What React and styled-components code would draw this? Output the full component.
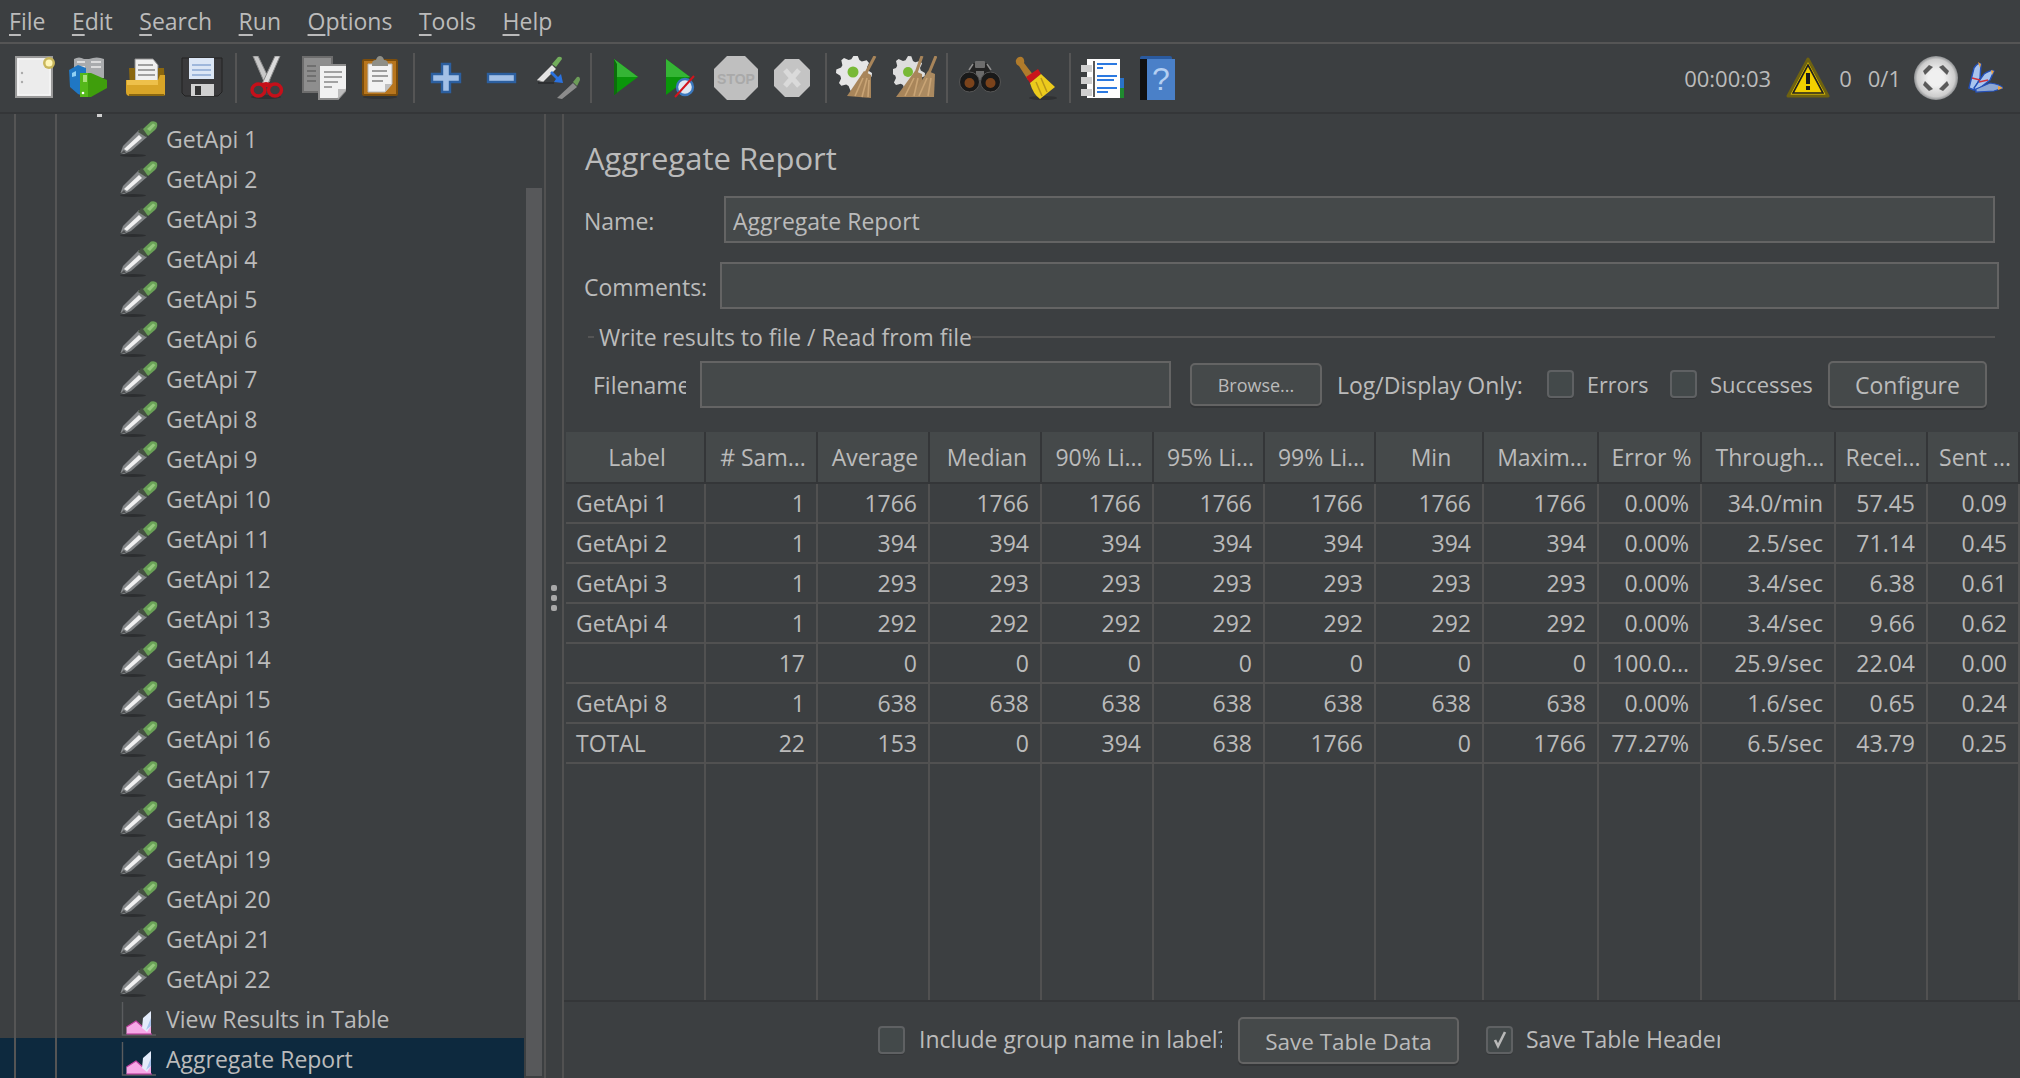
import React from 'react'
import styled, { createGlobalStyle } from 'styled-components'

const GlobalStyle = createGlobalStyle`
  html, body {
    margin: 0;
    padding: 0;
    background: #3c3f41;
    overflow: hidden;
  }
  * {
    box-sizing: border-box;
  }
`

const Window = styled.div`
  width: 2020px;
  height: 1078px;
  display: flex;
  flex-direction: column;
  overflow: hidden;
  background: #3c3f41;
  color: #bbbbbb;
  font-family: 'Open Sans', 'Noto Sans', sans-serif;
  font-size: 23px;
`

const MenuBar = styled.div`
  height: 44px;
  flex: none;
  display: flex;
  align-items: center;
  padding: 0 0 1px 9px;
  border-bottom: 2px solid #555555;
`

const MenuItem = styled.span`
  margin-right: 26.5px;
  u {
    text-decoration: underline;
    text-underline-offset: 4px;
    text-decoration-thickness: 2px;
  }
`

const Toolbar = styled.div`
  height: 70px;
  flex: none;
  display: flex;
  align-items: center;
  padding-left: 13px;
  border-bottom: 2px solid #343638;
`

const ToolIcon = styled.svg`
  flex: none;
  width: 44px;
  height: 44px;
  margin-left: ${(p) => p.$gap || 0}px;
`

const ToolSep = styled.div`
  flex: none;
  width: 2px;
  height: 50px;
  background: #555555;
  margin-left: ${(p) => p.$gap}px;
`

const Status = styled.div`
  margin-left: auto;
  display: flex;
  align-items: center;
  padding-right: 17px;
`

const StatusText = styled.span`
  margin-left: ${(p) => p.$gap || 0}px;
  font-size: 22px;
`

const Main = styled.div`
  flex: 1;
  min-height: 0;
  display: flex;
`

const TreePane = styled.div`
  width: 544px;
  flex: none;
  display: flex;
`

const Tree = styled.div`
  width: 524px;
  flex: none;
`

const TreeStub = styled.div`
  height: 4px;
  padding-left: 97px;
  background-image: linear-gradient(#555555, #555555), linear-gradient(#555555, #555555);
  background-size: 2px 100%, 2px 100%;
  background-position: 14px 0, 55px 0;
  background-repeat: no-repeat;
  i {
    display: block;
    width: 5px;
    height: 3px;
    background: #d0d0d0;
  }
`

const TreeRow = styled.div`
  height: 40px;
  display: flex;
  align-items: center;
  padding: 2px 0 0 120px;
  gap: 8px;
  background-color: ${(p) => (p.$selected ? '#0d293e' : 'transparent')};
  background-image: linear-gradient(#555555, #555555), linear-gradient(#555555, #555555);
  background-size: 2px 100%, 2px 100%;
  background-position: 14px 0, 55px 0;
  background-repeat: no-repeat;
  svg {
    flex: none;
    width: 38px;
    height: 38px;
  }
`

const ScrollTrack = styled.div`
  width: 20px;
  flex: none;
  padding: 74px 2px 2px 2px;
`

const ScrollThumb = styled.div`
  height: 100%;
  background: #57585a;
`

const Splitter = styled.div`
  width: 20px;
  flex: none;
  border-left: 2px solid #515151;
  border-right: 2px solid #515151;
  display: flex;
  flex-direction: column;
  align-items: center;
  justify-content: center;
  gap: 4px;
  padding-top: 3px;
  i {
    width: 6px;
    height: 6px;
    border-radius: 2px;
    background: #a8a8a8;
  }
`

const Panel = styled.div`
  flex: 1;
  min-width: 0;
  display: flex;
  flex-direction: column;
`

const Title = styled.div`
  font-size: 31px;
  line-height: 38px;
  padding: 25px 0 19px 21px;
`

const FormRow = styled.div`
  display: flex;
  align-items: center;
  height: 47px;
  padding-left: 20px;
  padding-right: ${(p) => p.$right}px;
  margin-bottom: 19px;
`

const FormLabel = styled.label`
  flex: none;
  width: ${(p) => p.$width}px;
  padding-top: 2px;
`

const Field = styled.input`
  flex: ${(p) => (p.$width ? 'none' : 1)};
  width: ${(p) => (p.$width ? `${p.$width}px` : 'auto')};
  height: 47px;
  min-width: 0;
  margin-left: ${(p) => p.$gap || 0}px;
  padding: 2px 7px 0;
  background: #45494a;
  border: 2px solid #646464;
  color: #bbbbbb;
  font: inherit;
  outline: none;
`

const GroupTitle = styled.div`
  display: flex;
  align-items: center;
  height: 24px;
  margin: -3px 25px 0 24px;
  &::before {
    content: '';
    width: 6px;
    height: 2px;
    margin-right: 5px;
    background: #555555;
  }
  &::after {
    content: '';
    flex: 1;
    height: 2px;
    background: #555555;
  }
`

const FileRow = styled.div`
  display: flex;
  align-items: center;
  height: 48px;
  margin-top: 11px;
  padding-left: 29px;
`

const Clipped = styled.span`
  flex: none;
  display: block;
  width: ${(p) => p.$width}px;
  margin-left: ${(p) => p.$gap || 0}px;
  padding: ${(p) => (p.$shift > 0 ? p.$shift : 0)}px 0 ${(p) => (p.$shift < 0 ? -p.$shift : 0)}px;
  font-size: ${(p) => p.$size || 23}px;
  overflow: hidden;
  white-space: nowrap;
`

const Button = styled.div`
  flex: none;
  display: flex;
  align-items: center;
  justify-content: center;
  width: ${(p) => p.$width}px;
  height: ${(p) => p.$height || 47}px;
  margin-left: ${(p) => p.$gap || 0}px;
  padding-top: 2px;
  font-size: ${(p) => p.$size || 23}px;
  background: #45494a;
  border: 2px solid #646464;
  border-radius: 5px;
  box-shadow: 0 2px 0 #343638;
`

const Checkbox = styled.span`
  flex: none;
  display: flex;
  align-items: center;
  justify-content: center;
  width: 27px;
  height: 28px;
  margin-left: ${(p) => p.$gap || 0}px;
  background: #43494a;
  border: 2px solid #5f6163;
  border-radius: 4px;
  box-shadow: 0 1px 0 #343638;
`

const ReportTable = styled.table`
  width: 1454px;
  height: 568px;
  margin: 24px 0 0 2px;
  border-collapse: separate;
  border-spacing: 0;
  table-layout: fixed;
`

const HeadCell = styled.th`
  height: 52px;
  padding: 0 0 0 4px;
  font-weight: 400;
  text-align: center;
  white-space: nowrap;
  overflow: hidden;
  background: #45494a;
  border-right: 2px solid #343638;
  border-bottom: 2px solid #343638;
`

const Cell = styled.td`
  height: 40px;
  padding: 0 ${(p) => (p.$left ? 0 : 11)}px 0 ${(p) => (p.$left ? 10 : 0)}px;
  text-align: ${(p) => (p.$left ? 'left' : 'right')};
  white-space: nowrap;
  overflow: hidden;
  border-right: 2px solid #515151;
  border-bottom: 2px solid #515151;
`

const FillCell = styled.td`
  border-right: 2px solid #515151;
  padding: 0;
`

const BottomBar = styled.div`
  flex: 1;
  display: flex;
  align-items: center;
  padding: 0 0 0 314px;
  border-top: 2px solid #343638;
`

const Pipette = () => (
  <svg viewBox="0 0 38 38">
    <ellipse cx="13" cy="35.5" rx="13" ry="1.5" fill="#2c2e30" />
    <path d="M0.5 33 L3 26 L19 10 L27 17 L11 31 L4 34 Z" fill="#85888a" />
    <path d="M4 29 L19 15 L22 18 L7 31 Z" fill="#f0f0f0" />
    <path d="M1 33 L4 30 L6 33 Z" fill="#505254" />
    <path d="M21 8 L25 9 L28 14 L26 17 L18 12 Z" fill="#465243" />
    <path d="M23 9 L31 1.5 Q35 0.5 37 3 Q38 7 35 10 L28 16 Z" fill="#6aa257" />
    <path d="M27 9 L33 3.5 L35.5 5 L30 11 Z" fill="#93c67c" />
  </svg>
)

const ReportIcon = () => (
  <svg viewBox="0 0 38 38">
    <path d="M2.5 2 V35 H36" fill="none" stroke="#5a5c5e" strokeWidth="1.4" />
    <path d="M6.5 34 V27 L16 21 L24 28 L31 25 V34 Z" fill="#f6a8e6" />
    <path d="M6.5 27 L16 21 L24 28 L31 25" fill="none" stroke="#c040a0" strokeWidth="1.2" />
    <path d="M6.5 34 H32" stroke="#c040a0" strokeWidth="1.2" />
    <path d="M22 28 L23 18 L31 11 V26 L27 32 Z" fill="#e4ecfb" />
    <path d="M26 30 L31 18 V26 Z" fill="#a9c4ee" />
  </svg>
)

// spiky outline for the gear part of the two "clear" icons
const gearPath = (cx, cy, outer, inner, teeth) => {
  const pts = []
  for (let i = 0; i < teeth * 4; i++) {
    const r = i % 4 < 2 ? outer : inner
    const a = (i / (teeth * 4)) * Math.PI * 2
    pts.push(`${(cx + r * Math.cos(a)).toFixed(1)} ${(cy + r * Math.sin(a)).toFixed(1)}`)
  }
  return `M${pts.join(' L')} Z`
}

const toolIcons = {
  newPlan: (
    <>
      <rect x="3" y="1" width="36" height="40" fill="#e6e6e6" stroke="#9a9a9a" strokeWidth="2" />
      <rect x="5" y="3" width="32" height="36" fill="#ececec" stroke="#fafafa" />
      <circle cx="9" cy="17" r="1.2" fill="#aaaaaa" />
      <circle cx="9" cy="26" r="1.2" fill="#aaaaaa" />
      <circle cx="36" cy="7" r="6" fill="#c9b75c" />
      <circle cx="36" cy="7" r="3.5" fill="#fff6b8" />
    </>
  ),
  templates: (
    <>
      <path d="M7 3 Q12 0 17 3 L22 3 Q30 0 37 3 V22 H7 Z" fill="#a9abad" />
      <path d="M10 6 H18 M24 6 H34 M10 11 H18 M24 11 H34" stroke="#dcdcdc" strokeWidth="2" />
      <path d="M2 14 L11 9 L19 12 V41 L11 38 L3 31 Z" fill="#1f77c4" />
      <path d="M5 17 L9 15 V20 L5 21 Z" fill="#8fd0f4" />
      <path d="M13 17 H24 L40 24 V32 L24 41 H13 Z" fill="#3f9e0c" />
      <path d="M13 17 H21 V41 H13 Z" fill="#55b81a" />
      <path d="M16 19 H20 V26 H16 Z" fill="#a9e07a" />
      <circle cx="16" cy="37" r="1.3" fill="#ffffff" />
    </>
  ),
  open: (
    <>
      <path d="M11 3 H29 L34 9 V26 H11 Z" fill="#f0f0f0" stroke="#8d8d8d" />
      <path d="M14 9 H29 M14 14 H31 M14 19 H31" stroke="#a0a0a0" strokeWidth="2" />
      <path d="M5 12 H11 V24 H34 V12 H40 L41 34 H6 Z" fill="#8a6710" />
      <path d="M2 24 H34 L36 19 L41 19 V38 Q41 40 38 40 H6 Q2 40 2 36 Z" fill="#d9a527" />
      <path d="M3 24 H34 V29 H3 Z" fill="#eec04a" />
      <path d="M5 38 H40 V40 H5 Z" fill="#8a6710" />
    </>
  ),
  save: (
    <>
      <path d="M2 2 H42 V36 L38 40 H5 L2 37 Z" fill="#3a3a3c" stroke="#222222" />
      <rect x="9" y="2" width="25" height="21" fill="#dbe6f5" />
      <path d="M12 9 H31 M12 14 H31 M12 19 H31" stroke="#8aa8d2" strokeWidth="1.6" />
      <rect x="11" y="28" width="23" height="12" fill="#d0d0d0" />
      <rect x="15" y="30" width="6" height="9" fill="#333333" />
    </>
  ),
  cut: (
    <>
      <ellipse cx="22" cy="41" rx="15" ry="2" fill="#2f3133" />
      <path d="M9 0 L14 0 L26 25 L21 28 Z" fill="#c8c8c8" stroke="#8c8c8c" />
      <path d="M36 0 L31 0 L18 28 L23 30 Z" fill="#dcdcdc" stroke="#8c8c8c" />
      <ellipse cx="14.5" cy="34" rx="6.5" ry="6" fill="none" stroke="#c5101a" strokeWidth="3.4" />
      <ellipse cx="31" cy="34" rx="6.5" ry="6" fill="none" stroke="#c5101a" strokeWidth="3.4" />
      <path d="M17 27 L22 26 L27 27 L24 31 H20 Z" fill="#c5101a" />
    </>
  ),
  copy: (
    <>
      <rect x="1" y="1" width="29" height="35" fill="#8e8e8e" stroke="#6d6d6d" strokeWidth="2" />
      <path d="M5 10 H14 M5 15 H14 M5 20 H14 M5 25 H14" stroke="#6f6f6f" strokeWidth="2" />
      <path d="M17 9 H45 V33 L36 43 H17 Z" fill="#f1f1f1" stroke="#8d8d8d" strokeWidth="2" />
      <path d="M22 16 H40 M22 21 H40 M22 26 H36 M22 31 H30" stroke="#a2a2a2" strokeWidth="2" />
      <path d="M36 43 V33 H45 Z" fill="#bdbdbd" />
    </>
  ),
  paste: (
    <>
      <ellipse cx="22" cy="41" rx="17" ry="2" fill="#313335" />
      <rect x="5" y="4" width="34" height="35" rx="1" fill="#b8761e" stroke="#7d4e0c" strokeWidth="2" />
      <path d="M10 8 H34 V28 L27 36 H10 Z" fill="#f2f2f2" stroke="#b9b9b9" />
      <path d="M27 36 V28 H34 Z" fill="#bfbfbf" />
      <path d="M14 15 H29 M14 20 H30 M14 25 H25" stroke="#9e9e9e" strokeWidth="2" />
      <path d="M14 8 Q14 4 18 4 Q19 0 22 0 Q25 0 26 4 Q30 4 30 8 V10 H14 Z" fill="#8f8f87" />
    </>
  ),
  plus: (
    <path
      d="M18 8 H26 V18 H36 V26 H26 V36 H18 V26 H8 V18 H18 Z"
      fill="#a3c0e6"
      stroke="#2c5f9f"
      strokeWidth="2.4"
    />
  ),
  minus: <rect x="9" y="18" width="27" height="8" fill="#a3c0e6" stroke="#2c5f9f" strokeWidth="2.4" />,
  remote: (
    <>
      <path d="M1 24 L4 21 L16 9 L20 13 L7 26 Z" fill="#e3e3e3" stroke="#8a8a8a" />
      <path d="M16 8 L22 1 Q26 0 26 3 L20 11 Z" fill="#72ad5c" />
      <path d="M2 27 H18" stroke="#2d2f31" strokeWidth="2" />
      <path d="M16 15 L22 21 L25 18 L27 27 L18 26 L20 23 L14 17 Z" fill="#2a72e0" />
      <path d="M21 42 L37 27 L41 31 L26 43 Z" fill="#9a9a9a" opacity="0.85" />
      <path d="M37 26 L41 21 Q44 20 44 24 L41 30 Z" fill="#6c9c58" />
    </>
  ),
  run: (
    <>
      <path d="M11 3 L35 21 L11 39 Z" fill="#0a960a" />
      <path d="M11 3 L35 21 L11 21 Z" fill="#35b535" />
      <path d="M11 3 V39 L14 37 V8 Z" fill="#0b6f0b" />
    </>
  ),
  runNoTimer: (
    <>
      <path d="M8 3 L32 21 L8 39 Z" fill="#0a960a" />
      <path d="M8 3 L32 21 L8 21 Z" fill="#35b535" />
      <circle cx="27" cy="31" r="8" fill="#dfe7f2" stroke="#3b78bd" strokeWidth="2.4" />
      <path d="M17 41 L36 20" stroke="#d2141c" strokeWidth="2" />
    </>
  ),
  stop: (
    <>
      <path d="M13 0 H31 L44 13 V31 L31 44 H13 L0 31 V13 Z" fill="#bfbfbf" />
      <text
        x="22"
        y="28"
        textAnchor="middle"
        fontFamily="'Liberation Sans', sans-serif"
        fontWeight="700"
        fontSize="14"
        fill="#a9a9a9"
      >
        STOP
      </text>
    </>
  ),
  shutdown: (
    <>
      <path d="M15 3 H29 L40 14 V30 L29 41 H15 L4 30 V14 Z" fill="#c4c4c4" />
      <path d="M15 14 L29 30 M29 14 L15 30" stroke="#dadada" strokeWidth="5" />
    </>
  ),
  clear: (
    <>
      <path d={gearPath(20, 17, 18, 14, 8)} fill="#e6e6e6" />
      <circle cx="19" cy="16" r="5.5" fill="#78b936" />
      <path d="M41 0 L32 17" stroke="#a8855a" strokeWidth="3" />
      <path d="M30 15 L37 19 L37 42 L13 40 Z" fill="#a8855a" />
      <path d="M29 22 L21 40 M33 22 L28 41 M35 24 L34 41" stroke="#c9a475" strokeWidth="1.6" />
    </>
  ),
  clearAll: (
    <>
      <path d={gearPath(15, 17, 17, 13, 8)} fill="#dedede" />
      <circle cx="15" cy="16" r="5" fill="#78b936" />
      <path d="M29 0 L23 17 M43 0 L36 17" stroke="#a8855a" strokeWidth="3" />
      <path d="M22 15 L29 18 L30 41 L3 41 Z" fill="#a8855a" />
      <path d="M35 15 L42 18 L41 41 L18 41 Z" fill="#ab8a60" />
      <path d="M21 22 L12 40 M25 22 L21 40 M34 22 L26 40 M38 22 L35 40" stroke="#c9a475" strokeWidth="1.6" />
    </>
  ),
  search: (
    <>
      <path d="M9 22 L13 9 Q14 7 18 7 H26 Q30 7 31 9 L35 22 Z" fill="#232323" />
      <rect x="17" y="5" width="10" height="7" rx="1" fill="#6d6d6d" />
      <rect x="18" y="15" width="8" height="9" fill="#6b6b6b" />
      <path d="M11 14 L15 8 M33 14 L29 8" stroke="#8d8d8d" strokeWidth="1.6" />
      <circle cx="11.5" cy="26" r="10" fill="#191919" stroke="#555555" />
      <circle cx="32.5" cy="26" r="10" fill="#191919" stroke="#555555" />
      <circle cx="11.5" cy="27" r="5" fill="#7b431b" />
      <circle cx="32.5" cy="27" r="5" fill="#7b431b" />
    </>
  ),
  broom: (
    <>
      <ellipse cx="30" cy="42" rx="14" ry="2" fill="#2f3133" />
      <path d="M3 4 Q5 0 9 1 Q12 3 11 7 L21 20 L15 24 L6 10 Q2 8 3 4 Z" fill="#b07b2b" />
      <path d="M13 21 L25 13 L28 18 L17 27 Z" fill="#c9141c" />
      <path d="M17 27 L28 18 L42 31 L27 43 Q20 38 17 27 Z" fill="#eccb1c" />
      <path d="M23 26 L29 40 M28 22 L34 36" stroke="#b8961a" strokeWidth="1.5" />
    </>
  ),
  list: (
    <>
      <rect x="38" y="22" width="6" height="13" fill="#2a72c8" />
      <rect x="38" y="32" width="6" height="10" fill="#1f8a2f" />
      <rect x="7" y="3" width="33" height="39" fill="#fdfdfd" />
      <path d="M14 5 V41" stroke="#222222" strokeWidth="1.5" />
      <rect x="1" y="9" width="11" height="7" fill="#cfcfcf" />
      <rect x="1" y="21" width="11" height="7" fill="#cfcfcf" />
      <rect x="1" y="33" width="11" height="7" fill="#cfcfcf" />
      <path d="M17 8 H37 M17 12 H23 M17 20 H37 M17 24 H34 M17 32 H37 M17 36 H28" stroke="#2a78e0" strokeWidth="2" />
    </>
  ),
  help: (
    <>
      <rect x="4" y="0" width="32" height="44" rx="2" fill="#2a5a9f" />
      <rect x="4" y="3" width="7" height="41" fill="#111111" />
      <rect x="11" y="3" width="28" height="41" fill="#4a80c8" />
      <text
        x="25"
        y="34"
        textAnchor="middle"
        fontFamily="'Liberation Sans', sans-serif"
        fontSize="32"
        fill="#b4cff2"
      >
        ?
      </text>
    </>
  ),
}

const toolbarItems = [
  { icon: 'newPlan', gap: 0 },
  { icon: 'templates', gap: 10 },
  { icon: 'open', gap: 13 },
  { icon: 'save', gap: 12 },
  { sep: 11 },
  { icon: 'cut', gap: 7 },
  { icon: 'copy', gap: 14 },
  { icon: 'paste', gap: 12 },
  { sep: 11 },
  { icon: 'plus', gap: 9 },
  { icon: 'minus', gap: 11 },
  { icon: 'remote', gap: 13 },
  { sep: 10 },
  { icon: 'run', gap: 11 },
  { icon: 'runNoTimer', gap: 11 },
  { icon: 'stop', gap: 12 },
  { icon: 'shutdown', gap: 12 },
  { sep: 11 },
  { icon: 'clear', gap: 7 },
  { icon: 'clearAll', gap: 15 },
  { sep: 9 },
  { icon: 'search', gap: 10 },
  { icon: 'broom', gap: 11 },
  { sep: 12 },
  { icon: 'list', gap: 9 },
  { icon: 'help', gap: 12 },
]

const menus = ['File', 'Edit', 'Search', 'Run', 'Options', 'Tools', 'Help']

const samplers = Array.from({ length: 22 }, (_, i) => `GetApi ${i + 1}`)

const columns = [
  ['Label', 140],
  ['# Sam...', 112],
  ['Average', 112],
  ['Median', 112],
  ['90% Li...', 112],
  ['95% Li...', 111],
  ['99% Li...', 111],
  ['Min', 108],
  ['Maxim...', 115],
  ['Error %', 103],
  ['Through...', 134],
  ['Recei...', 92],
  ['Sent ...', 92],
]

const rows = [
  ['GetApi 1', '1', '1766', '1766', '1766', '1766', '1766', '1766', '1766', '0.00%', '34.0/min', '57.45', '0.09'],
  ['GetApi 2', '1', '394', '394', '394', '394', '394', '394', '394', '0.00%', '2.5/sec', '71.14', '0.45'],
  ['GetApi 3', '1', '293', '293', '293', '293', '293', '293', '293', '0.00%', '3.4/sec', '6.38', '0.61'],
  ['GetApi 4', '1', '292', '292', '292', '292', '292', '292', '292', '0.00%', '3.4/sec', '9.66', '0.62'],
  ['', '17', '0', '0', '0', '0', '0', '0', '0', '100.0...', '25.9/sec', '22.04', '0.00'],
  ['GetApi 8', '1', '638', '638', '638', '638', '638', '638', '638', '0.00%', '1.6/sec', '0.65', '0.24'],
  ['TOTAL', '22', '153', '0', '394', '638', '1766', '0', '1766', '77.27%', '6.5/sec', '43.79', '0.25'],
]

const App = () => (
  <Window>
    <GlobalStyle />
    <MenuBar>
      {menus.map((m) => (
        <MenuItem key={m}>
          <u>{m[0]}</u>
          {m.slice(1)}
        </MenuItem>
      ))}
    </MenuBar>
    <Toolbar>
      {toolbarItems.map((item, i) =>
        item.sep ? (
          <ToolSep key={i} $gap={item.sep} />
        ) : (
          <ToolIcon key={i} viewBox="0 0 44 44" $gap={item.gap}>
            {toolIcons[item.icon]}
          </ToolIcon>
        )
      )}
      <Status>
        <StatusText>00:00:03</StatusText>
        <ToolIcon viewBox="0 0 44 44" $gap={15}>
          <path d="M22 3 L42 40 H2 Z" fill="#f2cf00" stroke="#6e6210" strokeWidth="3" strokeLinejoin="round" />
          <path d="M22 9 L37 37 H7 Z" fill="none" stroke="#1f1f1f" strokeWidth="1.6" />
          <rect x="20" y="17" width="4" height="11" fill="#1a1a1a" />
          <rect x="20" y="30" width="4" height="4" fill="#1a1a1a" />
        </ToolIcon>
        <StatusText $gap={9}>0</StatusText>
        <StatusText $gap={16}>0/1</StatusText>
        <ToolIcon viewBox="0 0 44 44" $gap={13}>
          <defs>
            <radialGradient id="ballShade">
              <stop offset="0.35" stopColor="#f0f0f0" />
              <stop offset="0.85" stopColor="#cdcdcd" />
              <stop offset="1" stopColor="#8c8e90" />
            </radialGradient>
          </defs>
          <circle cx="22" cy="22" r="22" fill="url(#ballShade)" />
          <path
            d="M9 15 L15 9 L19 11 L11 19 Z M35 15 L29 9 L25 11 L33 19 Z M9 29 L15 35 L19 33 L11 25 Z M35 29 L29 35 L25 33 L33 25 Z"
            fill="#5a5a5a"
          />
        </ToolIcon>
        <ToolIcon viewBox="-5 0 44 44" $gap={1}>
          <path d="M5 32 L10 12 Q14 6 17 8 L16 22 L10 34 Z" fill="#a9c4ee" stroke="#2450b8" strokeWidth="1.4" />
          <path d="M10 32 L20 18 Q28 13 30 15 L26 24 L12 35 Z" fill="#a9c4ee" stroke="#2450b8" strokeWidth="1.4" />
          <path d="M12 33 L26 27 Q36 28 39 32 L30 35 L12 36 Z" fill="#8ea8d4" stroke="#2450b8" strokeWidth="1.2" />
          <path d="M14 6 L17 8 L16 12 Z M27 14 L30 15 L28 19 Z M34 30 L39 32 L34 34 Z" fill="#f0a33a" />
          <path d="M8 22 L16 24 M15 26 L24 24" stroke="#d0343c" strokeWidth="1.4" />
        </ToolIcon>
      </Status>
    </Toolbar>
    <Main>
      <TreePane>
        <Tree>
          <TreeStub>
            <i />
          </TreeStub>
          {samplers.map((name) => (
            <TreeRow key={name}>
              <Pipette />
              {name}
            </TreeRow>
          ))}
          <TreeRow>
            <ReportIcon />
            View Results in Table
          </TreeRow>
          <TreeRow $selected>
            <ReportIcon />
            Aggregate Report
          </TreeRow>
        </Tree>
        <ScrollTrack>
          <ScrollThumb />
        </ScrollTrack>
      </TreePane>
      <Splitter>
        <i />
        <i />
        <i />
      </Splitter>
      <Panel>
        <Title>Aggregate Report</Title>
        <FormRow $right={25}>
          <FormLabel $width={140}>Name:</FormLabel>
          <Field readOnly value="Aggregate Report" />
        </FormRow>
        <FormRow $right={21}>
          <FormLabel $width={136}>Comments:</FormLabel>
          <Field readOnly value="" />
        </FormRow>
        <GroupTitle>Write results to file / Read from file</GroupTitle>
        <FileRow>
          <Clipped $width={93} $shift={2}>
            Filename
          </Clipped>
          <Field readOnly value="" $width={471} $gap={14} />
          <Button $width={132} $height={43} $size={18} $gap={19}>
            Browse...
          </Button>
          <Clipped $width={186} $gap={15} $shift={2}>
            Log/Display Only:
          </Clipped>
          <Checkbox $gap={24} />
          <Clipped $width={64} $gap={13} $size={21.5}>
            Errors
          </Clipped>
          <Checkbox $gap={19} />
          <Clipped $width={105} $gap={13} $size={22}>
            Successes
          </Clipped>
          <Button $width={159} $gap={13}>
            Configure
          </Button>
        </FileRow>
        <ReportTable>
          <colgroup>
            {columns.map(([name, width]) => (
              <col key={name} width={width} />
            ))}
          </colgroup>
          <thead>
            <tr>
              {columns.map(([name]) => (
                <HeadCell key={name}>{name}</HeadCell>
              ))}
            </tr>
          </thead>
          <tbody>
            {rows.map((row, r) => (
              <tr key={r}>
                {row.map((value, c) => (
                  <Cell key={c} $left={c === 0}>
                    {value}
                  </Cell>
                ))}
              </tr>
            ))}
            <tr>
              {columns.map(([name]) => (
                <FillCell key={name} />
              ))}
            </tr>
          </tbody>
        </ReportTable>
        <BottomBar>
          <Checkbox />
          <Clipped $width={303} $gap={14} $shift={-2}>
            Include group name in label?
          </Clipped>
          <Button $width={221} $gap={16} $size={22.5}>
            Save Table Data
          </Button>
          <Checkbox $gap={27}>
            <svg width="20" height="20" viewBox="0 0 20 20">
              <path d="M5 10 L8 16 L15 2" fill="none" stroke="#b8b8b8" strokeWidth="2.6" />
            </svg>
          </Checkbox>
          <Clipped $width={194} $gap={13} $shift={-2}>
            Save Table Header
          </Clipped>
        </BottomBar>
      </Panel>
    </Main>
  </Window>
)

export default App
